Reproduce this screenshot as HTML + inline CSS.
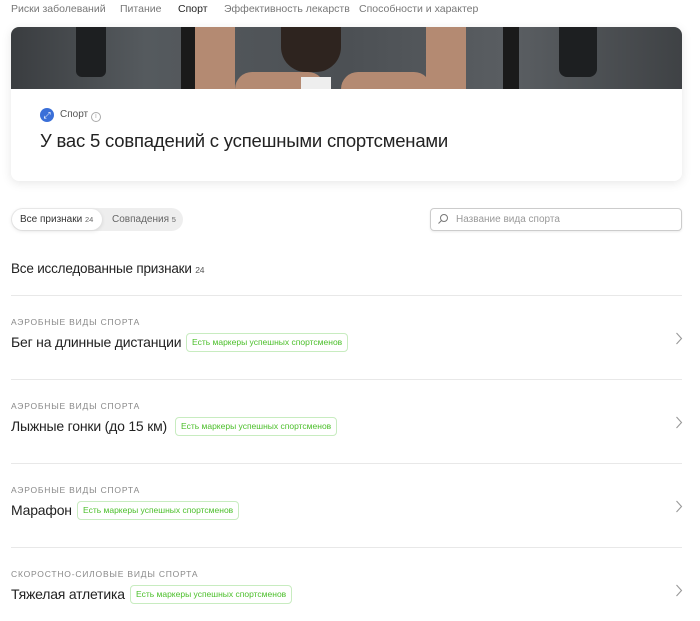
<!DOCTYPE html>
<html><head><meta charset="utf-8"><style>
*{box-sizing:border-box;margin:0;padding:0}
body{width:700px;height:621px;background:#fff;font-family:"Liberation Sans",sans-serif;position:relative;overflow:hidden;color:#222}
.a{position:absolute;white-space:nowrap}
.nav{font-size:10.5px;color:#777;top:3px}
.card{left:11px;top:27px;width:671px;height:154px;border-radius:8px;background:#fff;box-shadow:0 2px 10px rgba(0,0,0,.1);overflow:hidden}
.img{position:absolute;left:0;top:0;width:671px;height:62px;background:linear-gradient(90deg,#3a3d40,#555a5e 20%,#4c5054 50%,#5a5e62 75%,#3f4245)}
.hr{left:11px;width:671px;height:1px;background:#e8e8e8}
.cat{font-size:8.5px;color:#888;letter-spacing:.8px;left:11px}
.t{font-size:14px;left:11px;letter-spacing:-.2px}
.b{font-size:8.5px;color:#4bbf2a;border:1px solid #c8ecc0;border-radius:4px;padding:3px 5px;height:19px;line-height:11px}
.ch{left:675px}
</style></head><body>
<div class="a nav" style="left:11px">Риски заболеваний</div>
<div class="a nav" style="left:120px">Питание</div>
<div class="a nav" style="left:178px;color:#222">Спорт</div>
<div class="a" style="left:178px;top:32px;width:27px;height:2px;background:#c9a872"></div>
<div class="a nav" style="left:224px">Эффективность лекарств</div>
<div class="a nav" style="left:359px">Способности и характер</div>
<div class="a card"><div class="img">
<div class="a" style="left:65px;top:0;width:30px;height:50px;background:#1d1f21;border-radius:0 0 6px 6px"></div>
<div class="a" style="left:170px;top:0;width:14px;height:62px;background:#1a1a1a"></div>
<div class="a" style="left:184px;top:0;width:40px;height:62px;background:#b48a72"></div>
<div class="a" style="left:224px;top:45px;width:90px;height:17px;background:#b48a72;border-radius:20px 20px 0 0"></div>
<div class="a" style="left:270px;top:0;width:60px;height:45px;background:#2e241f;border-radius:0 0 25px 25px"></div>
<div class="a" style="left:290px;top:50px;width:30px;height:12px;background:#eee"></div>
<div class="a" style="left:330px;top:45px;width:90px;height:17px;background:#b48a72;border-radius:20px 20px 0 0"></div>
<div class="a" style="left:415px;top:0;width:40px;height:62px;background:#b48a72"></div>
<div class="a" style="left:492px;top:0;width:16px;height:62px;background:#1a1a1a"></div>
<div class="a" style="left:548px;top:0;width:38px;height:50px;background:#1d1f21;border-radius:0 0 8px 8px"></div>
</div>
<div class="a" style="left:29px;top:81px;width:14px;height:14px;border-radius:50%;background:#3a6fd8;color:#fff;font-size:9px;line-height:14px;text-align:center">⤢</div>
<div class="a" style="left:49px;top:82px;font-size:10px;color:#555">Спорт <span style="display:inline-block;width:10px;height:10px;border:1px solid #aaa;border-radius:50%;font-size:7px;line-height:8px;text-align:center;color:#aaa;vertical-align:-1px">i</span></div>
<div class="a" style="left:29px;top:103px;font-size:18.5px;color:#222;letter-spacing:-.2px">У вас 5 совпадений с успешными спортсменами</div>
</div>
<div class="a" style="left:11px;top:208px;width:172px;height:23px;border-radius:12px;background:#eee"></div>
<div class="a" style="left:12px;top:209px;width:90px;height:21px;border-radius:11px;background:#fff;box-shadow:0 1px 4px rgba(0,0,0,.12)"></div>
<div class="a" style="left:20px;top:214px;font-size:10px;color:#333">Все признаки <span style="font-size:7.5px;color:#666">24</span></div>
<div class="a" style="left:112px;top:214px;font-size:10px;color:#666">Совпадения <span style="font-size:7.5px">5</span></div>
<div class="a" style="left:430px;top:208px;width:252px;height:23px;border:1px solid #ccc;border-radius:4px;box-shadow:0 1px 2px rgba(0,0,0,.08)"></div>
<svg class="a" style="left:437px;top:213px" width="12" height="12" viewBox="0 0 12 12"><circle cx="7" cy="5" r="3.5" fill="none" stroke="#777"/><path d="M4.5 7.5L1.5 10.5" stroke="#777"/></svg>
<div class="a" style="left:456px;top:214px;font-size:10px;color:#999">Название вида спорта</div>
<div class="a" style="left:11px;top:261px;font-size:13.5px;color:#222;letter-spacing:-.2px">Все исследованные признаки <span style="font-size:8.5px;color:#555">24</span></div>

<div class="a hr" style="top:295px"></div>
<div class="a cat" style="top:317px">АЭРОБНЫЕ ВИДЫ СПОРТА</div>
<div class="a t" style="top:334px">Бег на длинные дистанции</div>
<div class="a b" style="left:186px;top:333px">Есть маркеры успешных спортсменов</div>
<svg class="a ch" style="top:332px" width="8" height="13" viewBox="0 0 8 13"><path d="M1.5 1L6.5 6.5L1.5 12" fill="none" stroke="#999" stroke-width="1.1"/></svg>

<div class="a hr" style="top:379px"></div>
<div class="a cat" style="top:401px">АЭРОБНЫЕ ВИДЫ СПОРТА</div>
<div class="a t" style="top:418px">Лыжные гонки (до 15 км)</div>
<div class="a b" style="left:175px;top:417px">Есть маркеры успешных спортсменов</div>
<svg class="a ch" style="top:416px" width="8" height="13" viewBox="0 0 8 13"><path d="M1.5 1L6.5 6.5L1.5 12" fill="none" stroke="#999" stroke-width="1.1"/></svg>

<div class="a hr" style="top:463px"></div>
<div class="a cat" style="top:485px">АЭРОБНЫЕ ВИДЫ СПОРТА</div>
<div class="a t" style="top:502px">Марафон</div>
<div class="a b" style="left:77px;top:501px">Есть маркеры успешных спортсменов</div>
<svg class="a ch" style="top:500px" width="8" height="13" viewBox="0 0 8 13"><path d="M1.5 1L6.5 6.5L1.5 12" fill="none" stroke="#999" stroke-width="1.1"/></svg>

<div class="a hr" style="top:547px"></div>
<div class="a cat" style="top:569px">СКОРОСТНО-СИЛОВЫЕ ВИДЫ СПОРТА</div>
<div class="a t" style="top:586px">Тяжелая атлетика</div>
<div class="a b" style="left:130px;top:585px">Есть маркеры успешных спортсменов</div>
<svg class="a ch" style="top:584px" width="8" height="13" viewBox="0 0 8 13"><path d="M1.5 1L6.5 6.5L1.5 12" fill="none" stroke="#999" stroke-width="1.1"/></svg>
</body></html>
